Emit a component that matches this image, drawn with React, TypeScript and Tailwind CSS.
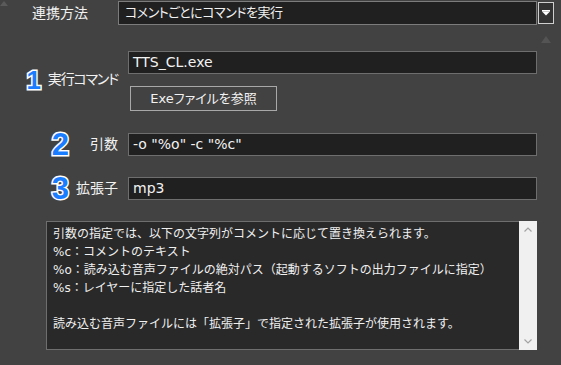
import React from 'react';

const FONT = "font-['DejaVu_Sans','Noto_Sans_CJK_JP',sans-serif]";
const PALT = "[font-feature-settings:'palt']";

const Badge = ({ n, small }: { n: string; small?: boolean }) => (
  <span
    className={`font-['Liberation_Sans',sans-serif] font-black leading-[20px] text-[#1a7cff] [-webkit-text-stroke:3px_#ffffff] [paint-order:stroke_fill] ${
      small ? 'text-[26px]' : 'text-[31px]'
    }`}
  >
    {n}
  </span>
);

const Field = ({ value }: { value: string }) => (
  <div className="h-[23px] w-[409px] border border-[#6e6e6e] bg-[#202020] px-[4px] text-[14px] leading-[21px] text-[#f2f2f2] whitespace-pre">
    {value}
  </div>
);

export default function App() {
  const help = [
    '引数の指定では、以下の文字列がコメントに応じて置き換えられます。',
    '%c：コメントのテキスト',
    '%o：読み込む音声ファイルの絶対パス（起動するソフトの出力ファイルに指定）',
    '%s：レイヤーに指定した話者名',
    '\u00a0',
    '読み込む音声ファイルには「拡張子」で指定された拡張子が使用されます。',
  ];

  return (
    <div className={`relative h-[365px] w-[561px] overflow-hidden bg-[#424242] text-[#f2f2f2] ${FONT}`}>
      {/* scroll arrows peeking over the panel */}
      <div className="absolute left-[0px] top-[1px] h-0 w-0 border-x-[4px] border-b-[5px] border-x-transparent border-b-[#5a5a5a]" />
      <div className="absolute left-[541px] top-[36px] h-0 w-0 border-x-[5px] border-b-[7px] border-x-transparent border-b-[#545454]" />

      {/* 連携方法 */}
      <div className="flex items-start pt-[1px]">
        <div className={`w-[118px] pl-[32px] pt-[3px] text-[14px] leading-[18px] ${PALT}`}>連携方法</div>
        <div className={`h-[24px] w-[419px] border border-[#7c7c7c] bg-[#202020] px-[6px] text-[13px] leading-[22px] tracking-[-0.5px] ${PALT}`}>
          コメントごとにコマンドを実行
        </div>
        <div className="ml-[1px] mt-[1px] flex h-[22px] w-[16px] items-center justify-center border border-[#cfcfcf] bg-[#333333]">
          <svg width="8" height="6" viewBox="0 0 8 6">
            <rect x="0" y="0" width="8" height="1.5" fill="#ffffff" />
            <path d="M0 1.5 H8 L4 5.5 Z" fill="#ffffff" />
          </svg>
        </div>
      </div>

      <div className="mt-[26px] grid grid-cols-[118px_409px] gap-x-[10px]">
        {/* 実行コマンド */}
        <div className="flex h-[60px] items-center justify-end gap-[7px] pb-[3px]">
          <Badge n="1" small />
          <span className={`text-[14px] tracking-[-1.2px] ${PALT}`}>実行コマンド</span>
        </div>
        <div className="flex flex-col">
          <Field value="TTS_CL.exe" />
          <button className={`ml-[2px] mt-[12px] h-[25px] w-[147px] border border-[#a8a8a8] bg-[#424242] text-[13px] leading-[22px] text-[#f2f2f2] ${PALT}`}>
            Exeファイルを参照
          </button>
        </div>

        {/* 引数 */}
        <div className="mt-[22px] flex h-[23px] items-center justify-end gap-[21px]">
          <Badge n="2" />
          <span className="text-[14px]">引数</span>
        </div>
        <div className="mt-[22px]">
          <Field value={'-o "%o" -c "%c"'} />
        </div>

        {/* 拡張子 */}
        <div className="mt-[21px] flex h-[23px] items-center justify-end gap-[7px]">
          <Badge n="3" />
          <span className="text-[14px]">拡張子</span>
        </div>
        <div className="mt-[21px]">
          <Field value="mp3" />
        </div>
      </div>

      {/* help text */}
      <div className="ml-[46px] mt-[21px] flex h-[129px] w-[491px] border border-[#6e6e6e] bg-[#292929]">
        <div className="flex-1 px-[6px] pt-[3px] text-[12px] leading-[18px] text-[#f0f0f0]">
          {help.map((line, i) => (
            <div key={i} className="whitespace-nowrap">{line}</div>
          ))}
        </div>
        <div className="-my-px -mr-px flex w-[18px] flex-col items-center justify-between bg-[#f0f0f0] py-[6px]">
          <svg width="8" height="5" viewBox="0 0 8 5">
            <path d="M0.5 4.5 L4 1 L7.5 4.5" stroke="#a3a3a3" strokeWidth="1.2" fill="none" />
          </svg>
          <svg width="8" height="5" viewBox="0 0 8 5">
            <path d="M0.5 0.5 L4 4 L7.5 0.5" stroke="#a3a3a3" strokeWidth="1.2" fill="none" />
          </svg>
        </div>
      </div>
    </div>
  );
}
